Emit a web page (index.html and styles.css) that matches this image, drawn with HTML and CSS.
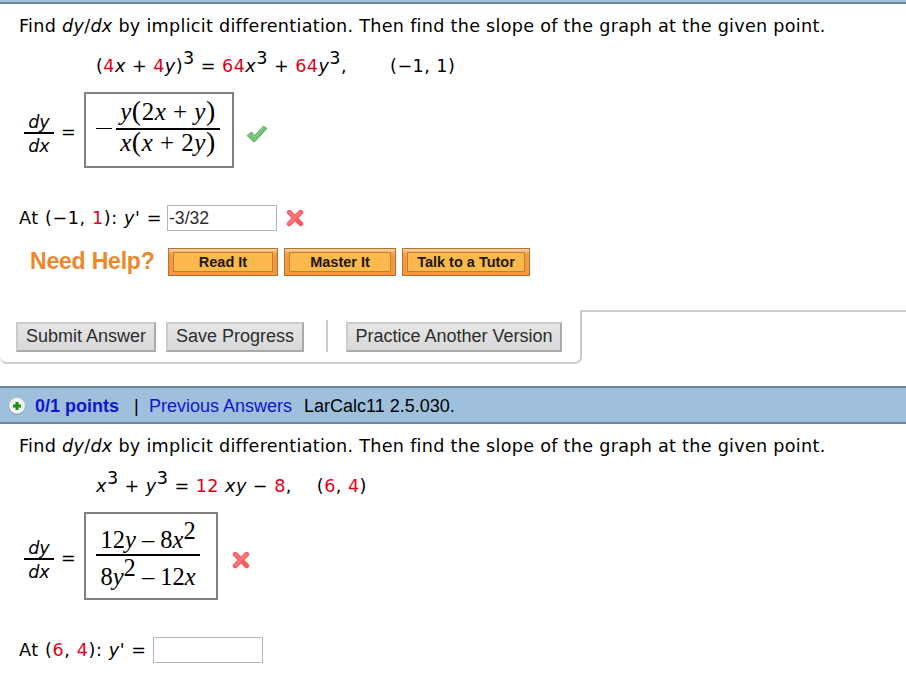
FILE: index.html
```html
<!DOCTYPE html>
<html lang="en">
<head>
<meta charset="utf-8">
<title>Implicit differentiation</title>
<link rel="stylesheet" href="styles.css">
</head>
<body>
<div class="strip"></div>
<section class="problem first">
  <p class="prompt">Find <i>dy</i>/<i>dx</i> by implicit differentiation. Then find the slope of the graph at the given point.</p>
  <p class="equation eq1"><span>(<b>4</b><i>x</i> + <b>4</b><i>y</i>)<sup>3</sup> = <b>64</b><i>x</i><sup>3</sup> + <b>64</b><i>y</i><sup>3</sup>,</span><span>(−1, 1)</span></p>
  <div class="answer">
    <div class="ratio"><i>dy</i><i>dx</i></div><span class="eq">=</span>
    <div class="mathbox box1"><span class="minus"></span><div class="frac"><span class="num"><i>y</i><span class="paren">(</span>2<i>x</i> + <i>y</i><span class="paren">)</span></span><span class="den"><i>x</i><span class="paren">(</span><i>x</i> + 2<i>y</i><span class="paren">)</span></span></div></div>
    <svg class="check" viewBox="0 0 22 20"><path d="M1 11.5 5.5 8l3.3 3.5L17.5 2 21 4.5 9 17.5H7.3Z" fill="#73c173" stroke="#65ae68" stroke-linejoin="round"/><path d="M3 11.2 5.4 9.5l3.3 3.6L17.7 3.5" fill="none" stroke="#93d391"/></svg>
  </div>
  <div class="at at1"><span>At (−1, <b>1</b>): <i>y</i>' =</span><input type="text" value="-3/32" aria-label="Slope"><svg class="cross" viewBox="0 0 18 18"><path d="M3.3 3.3 14.7 14.7M14.7 3.3 3.3 14.7" stroke="#f45b60" stroke-width="5" stroke-linecap="round"/><path d="M3.3 3.3 9 8.5 14.5 3.3M3.5 14.5 8 10" stroke="#ff777b" stroke-width="2.5" stroke-linecap="round" fill="none"/></svg></div>
  <div class="help"><strong>Need Help?</strong><button class="w1"><span>Read It</span></button><button class="w2"><span>Master It</span></button><button class="w3"><span>Talk to a Tutor</span></button></div>
</section>
<div class="actions">
  <div class="tab"><button class="submit">Submit Answer</button><button class="save">Save Progress</button><span class="divider"></span><button class="practice">Practice Another Version</button></div>
  <div class="rest"></div>
</div>
<header class="bar">
  <svg class="plus" viewBox="0 0 18 18"><circle cx="9" cy="9.6" r="8.2" fill="#7d98ac"/><circle cx="9" cy="8.8" r="8" fill="#f3f3f1"/><path d="M9 5v8M5 9h8" stroke="#159015" stroke-width="3"/></svg>
  <strong>0/1 points</strong><span class="pipe">|</span><a>Previous Answers</a><span class="source">LarCalc11 2.5.030.</span>
</header>
<section class="problem second">
  <p class="prompt">Find <i>dy</i>/<i>dx</i> by implicit differentiation. Then find the slope of the graph at the given point.</p>
  <p class="equation eq2"><span><i>x</i><sup>3</sup> + <i>y</i><sup>3</sup> = <b>12</b> <i>xy</i> − <b>8</b>,</span><span>(<b>6</b>, <b>4</b>)</span></p>
  <div class="answer">
    <div class="ratio"><i>dy</i><i>dx</i></div><span class="eq">=</span>
    <div class="mathbox box2"><div class="frac"><span class="num">12<i>y</i> – 8<i>x</i><sup>2</sup></span><span class="den">8<i>y</i><sup>2</sup> – 12<i>x</i></span></div></div>
    <svg class="cross" viewBox="0 0 18 18"><path d="M3.3 3.3 14.7 14.7M14.7 3.3 3.3 14.7" stroke="#f45b60" stroke-width="5" stroke-linecap="round"/><path d="M3.3 3.3 9 8.5 14.5 3.3M3.5 14.5 8 10" stroke="#ff777b" stroke-width="2.5" stroke-linecap="round" fill="none"/></svg>
  </div>
  <div class="at at2"><span>At (<b>6</b>, <b>4</b>): <i>y</i>' =</span><input type="text" aria-label="Slope"></div>
</section>
</body>
</html>
```
FILE: styles.css
```css
* { box-sizing: border-box; }
body { margin: 0; width: 906px; height: 674px; overflow: hidden; background: #fff; color: #000; font: 17.6px/24px "DejaVu Sans", sans-serif; }
p { margin: 0; white-space: pre; }
svg { display: block; flex: none; }
b { font-weight: normal; color: #e1001a; }
sup { font-size: inherit; line-height: 0; vertical-align: 8px; }
.strip { height: 4px; background: #9ec0dd; border-bottom: 2px solid #6e8798; }
.problem { display: flex; flex-direction: column; }
.first { height: 306px; }
.prompt { height: 24px; margin: 10px 0 0 19px; letter-spacing: .28px; }
.equation { display: flex; height: 24px; margin: 16px 0 0 96px; letter-spacing: .46px; }
.eq1 { gap: 43px; }
.eq2 { gap: 25px; }
.answer { display: flex; align-items: center; margin: 14px 0 0 24px; }
.ratio { display: grid; width: 30px; height: 48px; margin-top: 6px; grid-template-rows: 24px 24px; text-align: center; line-height: 24px; background: linear-gradient(#000, #000) 0 23px / 30px 2px no-repeat; }
.ratio i:first-child { line-height: 26px; }
.ratio i:last-child { line-height: 27px; }
.eq { width: 30px; padding: 3px 0 0 7px; }
.mathbox { display: flex; align-items: center; border: 2px solid #808080; font: 25px/28px "Liberation Serif", serif; }
.mathbox .frac { width: 104px; display: flex; flex-direction: column; }
.frac span { white-space: pre; }
.num { border-bottom: 2px solid #000; text-align: center; }
.den { text-align: center; }
.box1 { width: 150px; height: 76px; padding-left: 10px; letter-spacing: .5px; }
.paren { font-size: 28px; line-height: 0; }
.minus { width: 16px; height: 1px; background: #000; margin: 0 4px 4px 0; }
.box1 .num { height: 36px; line-height: 35px; }
.box1 .den { height: 36px; line-height: 26px; }
.box2 { width: 134px; height: 88px; padding-left: 10px; font-size: 24.5px; }
.box2 .num { height: 42px; line-height: 52px; }
.box2 .den { height: 42px; line-height: 41px; }
.box2 sup { vertical-align: 9px; }
.check { width: 22px; height: 20px; margin: 8px 0 0 12px; }
.cross { width: 18px; height: 18px; }
.answer .cross { margin: 8px 0 0 14px; }
.at { display: flex; align-items: center; height: 26px; margin: 37px 0 0 19px; white-space: pre; letter-spacing: .6px; }
.at span { width: 148px; }
.at2 span { width: 134px; }
input { width: 110px; height: 26px; padding: 0 1px; margin: 0; border: 1px solid #b5b5b5; outline: 0; color: #2b2b2b; font: 17.6px "Liberation Sans", sans-serif; }
.at .cross { margin-left: 9px; }
.help { display: flex; gap: 6px; height: 28px; margin: 17px 0 0 30px; }
.help strong { width: 132px; font: bold 23px/27px "Liberation Sans", sans-serif; letter-spacing: -.2px; color: #ed872a; }
.help button { height: 28px; padding: 3px 4px; border: 1px solid #b4712f; background: linear-gradient(#fbd5b3, #f89a3e 20%, #f8953b); font: bold 14.5px/19px "Liberation Sans", sans-serif; color: #1d1705; }
.help button span { display: block; height: 20px; border: 1px solid #b98235; background: #fbb84d; }
.w1 { width: 110px; } .w2 { width: 112px; } .w3 { width: 128px; }
.actions { display: flex; height: 76px; }
.tab { display: flex; width: 582px; height: 54px; padding: 12px 0 0 16px; border: solid #ccc; border-width: 0 2px 2px 0; border-radius: 0 0 7px 7px; }
.rest { flex: 1; height: 2px; background: #ccc; }
.tab button { height: 30px; padding: 0 0 2px; border: 2px solid #aaa; border-top-color: #ccc; border-left-color: #ccc; background: linear-gradient(#e6e6e6, #d8d8d8); font: 18px/24px "Liberation Sans", sans-serif; color: #2d2d2d; white-space: nowrap; }
.submit { width: 140px; }
.save { width: 138px; margin-left: 10px; }
.divider { width: 2px; height: 32px; margin: -2px 18px 0 22px; background: #ccc; }
.practice { width: 216px; }
.bar { display: flex; align-items: center; height: 38px; border: solid #6e8798; border-width: 2px 0; background: #9ec0dd; font: 18px/34px "Liberation Sans", sans-serif; white-space: pre; }
.bar > :not(svg) { padding-top: 2px; }
.plus { width: 18px; height: 18px; margin: 2px 9px 0 8px; }
.bar strong { width: 99px; color: #1414cc; }
.pipe { width: 15px; }
.bar a { width: 155px; color: #1414cc; }
```
